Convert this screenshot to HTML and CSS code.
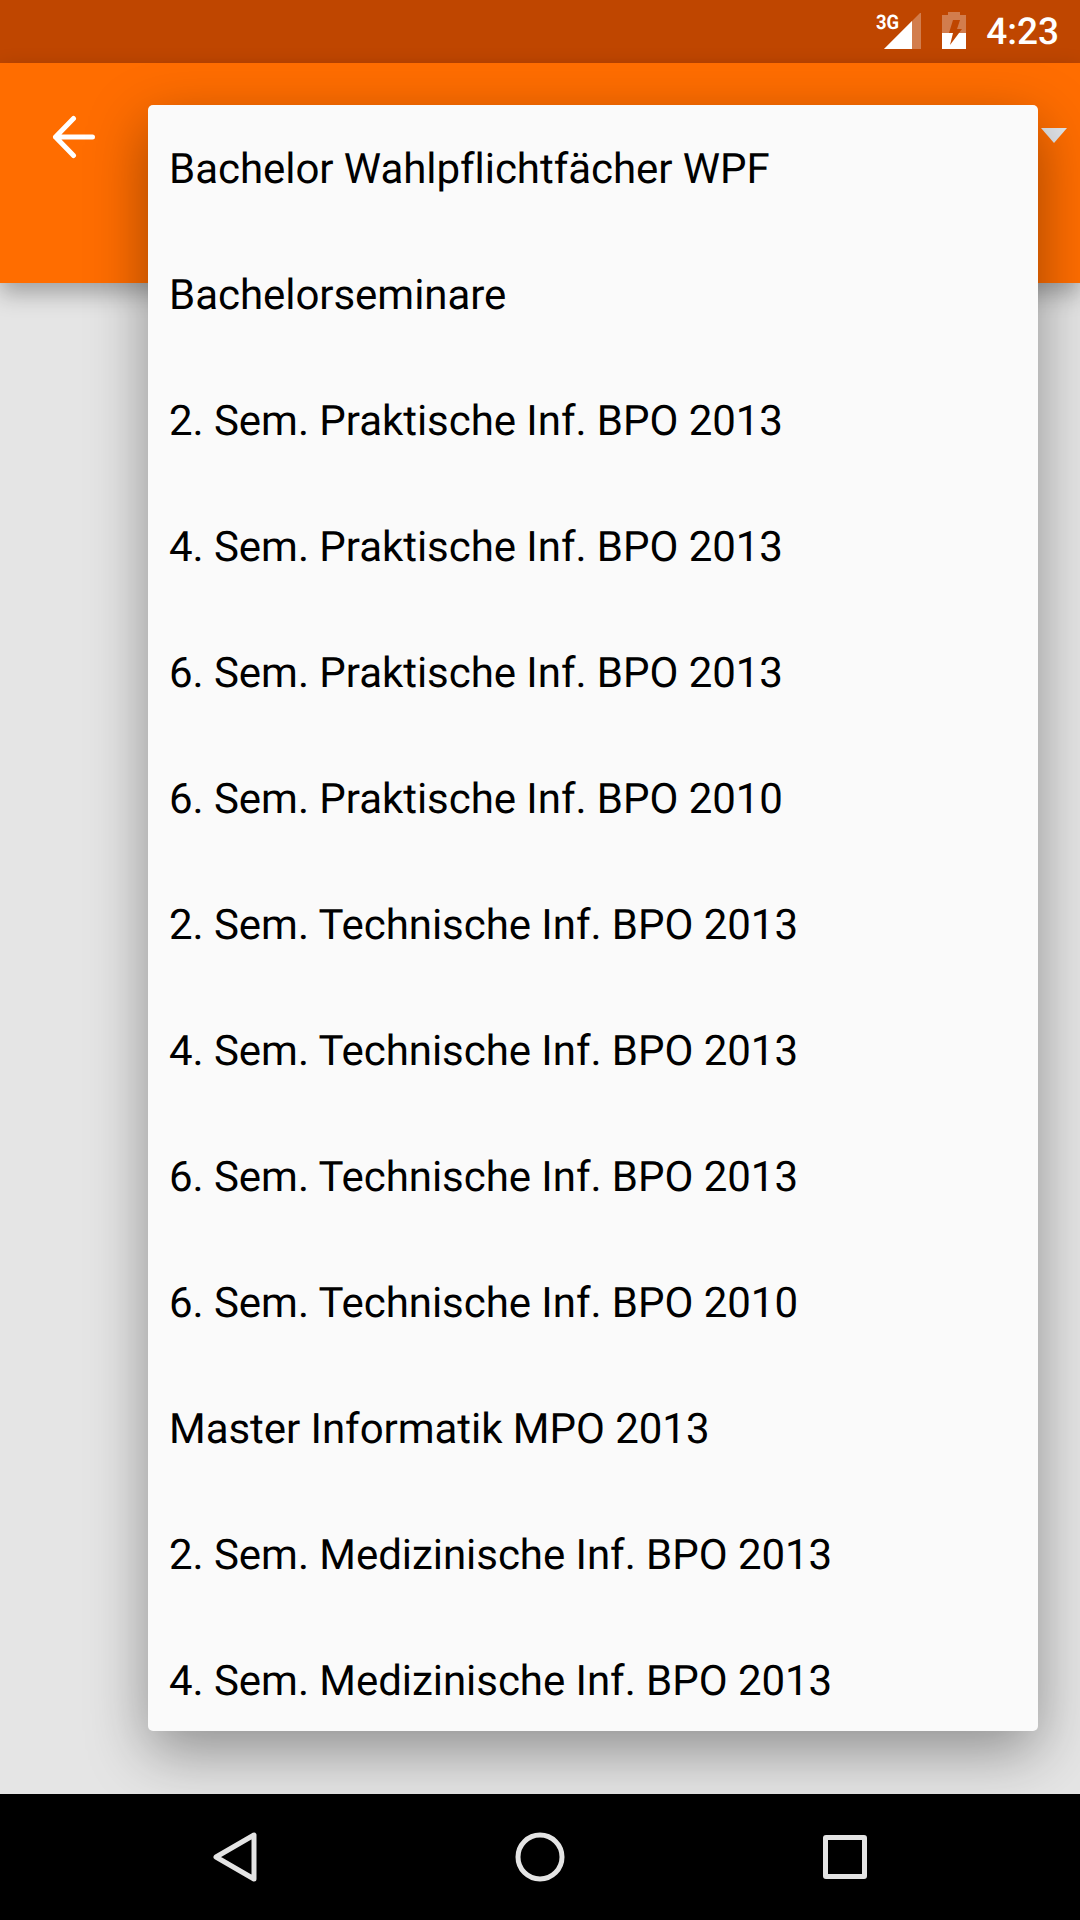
FILE: index.html
```html
<!DOCTYPE html>
<html lang="de">
<head>
    <meta charset="UTF-8">
    <meta name="viewport" content="width=device-width, initial-scale=1.0">
    <title>Studiengang</title>
    <link rel="stylesheet" href="styles.css">
</head>
<body>
    <div class="screen">
        <div class="status-bar">
            <div class="signal">
                <span class="net-label">3G</span>
                <svg class="signal-icon" width="37" height="36" viewBox="0 0 37 36">
                    <polygon points="0,36 36,0 37,0 37,36" fill="#fff" opacity="0.3"/>
                    <polygon points="0,36 28,8 28,36" fill="#fff"/>
                </svg>
            </div>
            <svg class="battery-icon" width="26" height="38" viewBox="0 0 26 38">
                <path d="M7 0h12v3h6v34H1V3h6z" fill="#fff" opacity="0.3"/>
                <path d="M1 21h24v16H1z" fill="#fff"/>
                <path d="M12 8h7l-3 9h5L9 33l3-12H8z" fill="#bf4600"/>
            </svg>
            <span class="clock">4:23</span>
        </div>

        <div class="toolbar">
            <svg class="back-arrow" width="44" height="44" viewBox="0 0 44 44">
                <path d="M40.500 22H3.500M21.500 3.500L3.500 22l18 18.500" fill="none" stroke="#fff" stroke-width="5" stroke-linecap="round" stroke-linejoin="round"/>
            </svg>
            <div class="spinner-arrow"></div>
        </div>

        <div class="content"></div>

        <div class="nav-bar">
            <svg width="44" height="50" viewBox="0 0 44 50">
                <path d="M41 3v44L3 25z" fill="none" stroke="#e4e4e4" stroke-width="5" stroke-linejoin="round"/>
            </svg>
            <svg width="50" height="50" viewBox="0 0 50 50">
                <circle cx="25" cy="25" r="22" fill="none" stroke="#e4e4e4" stroke-width="5"/>
            </svg>
            <div class="nav-square"></div>
        </div>

        <ul class="menu">
            <li>Bachelor Wahlpflichtfächer WPF</li>
            <li>Bachelorseminare</li>
            <li>2. Sem. Praktische Inf. BPO 2013</li>
            <li>4. Sem. Praktische Inf. BPO 2013</li>
            <li>6. Sem. Praktische Inf. BPO 2013</li>
            <li>6. Sem. Praktische Inf. BPO 2010</li>
            <li>2. Sem. Technische Inf. BPO 2013</li>
            <li>4. Sem. Technische Inf. BPO 2013</li>
            <li>6. Sem. Technische Inf. BPO 2013</li>
            <li>6. Sem. Technische Inf. BPO 2010</li>
            <li>Master Informatik MPO 2013</li>
            <li>2. Sem. Medizinische Inf. BPO 2013</li>
            <li>4. Sem. Medizinische Inf. BPO 2013</li>
        </ul>
    </div>
</body>
</html>
```

FILE: styles.css
```css
html, body {
    margin: 0;
    padding: 0;
}
body {
    font-family: Roboto, "Liberation Sans", sans-serif;
    background: #e5e5e5;
    text-rendering: geometricPrecision;
}
.screen {
    position: relative;
    width: 1080px;
    height: 1920px;
    display: flex;
    flex-direction: column;
    overflow: hidden;
}
.status-bar {
    height: 63px;
    flex: none;
    background: #bf4600;
    display: flex;
    align-items: flex-start;
    padding-right: 21px;
    justify-content: flex-end;
    box-sizing: border-box;
    color: #fff;
}
.signal {
    display: flex;
    align-items: flex-start;
    margin-right: 20px;
}
.net-label {
    font-size: 20px;
    font-weight: 700;
    line-height: 20px;
    margin-top: 12px;
    margin-right: -16px;
    transform: scaleX(0.92);
}
.signal-icon {
    margin-top: 13px;
}
.battery-icon {
    margin-top: 12px;
    margin-right: 19px;
}
.clock {
    font-size: 37px;
    font-weight: 500;
    line-height: 65px;
}
.toolbar {
    height: 220px;
    flex: none;
    background: #ff6d00;
    box-shadow: 0 10px 22px rgba(0, 0, 0, 0.3);
    display: flex;
    justify-content: space-between;
    align-items: flex-start;
    padding: 52px 13px 0 52px;
    box-sizing: border-box;
    position: relative;
}
.spinner-arrow {
    width: 0;
    height: 0;
    border-left: 13px solid transparent;
    border-right: 13px solid transparent;
    border-top: 15px solid #e3e6ea;
    margin-top: 13px;
}
.content {
    flex: 1;
    background: #e5e5e5;
}
.nav-bar {
    height: 126px;
    flex: none;
    background: #000;
    display: flex;
    align-items: center;
    position: relative;
    padding: 0 213px;
    justify-content: space-between;
    box-sizing: border-box;
}
.nav-square {
    width: 44px;
    height: 44px;
    box-sizing: border-box;
    border: 5px solid #e4e4e4;
    border-radius: 3px;
}
.menu {
    position: absolute;
    left: 148px;
    top: 105px;
    width: 890px;
    height: 1626px;
    margin: 0;
    padding: 0;
    list-style: none;
    background: #fafafa;
    border-radius: 5px;
    overflow: hidden;
    box-shadow: 0 20px 60px rgba(0, 0, 0, 0.38);
}
.menu li {
    height: 126px;
    line-height: 130px;
    padding: 0 21px;
    font-size: 42px;
    letter-spacing: -0.04px;
    color: #000;
    white-space: nowrap;
}
```
